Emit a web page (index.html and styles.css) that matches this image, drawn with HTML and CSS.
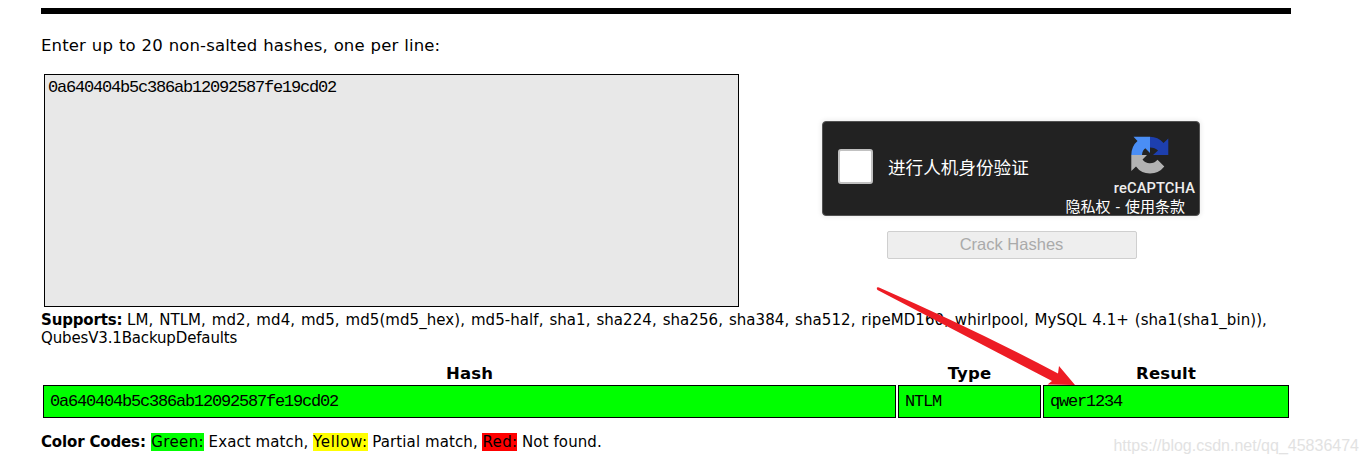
FILE: index.html
```html
<!DOCTYPE html>
<html lang="en">
<head>
<meta charset="utf-8">
<title>Hash Cracker</title>
<link rel="stylesheet" href="styles.css">
</head>
<body>
<main class="page">
  <hr class="rule">
  <p class="intro">Enter up to 20 non-salted hashes, one per line:</p>
  <section class="form">
    <div class="hash-input mono">0a640404b5c386ab12092587fe19cd02</div>
    <div class="side">
      <div class="captcha">
        <span class="check"></span>
        <span class="captcha-label">进行人机身份验证</span>
        <div class="brand">
          <svg class="logo" width="38" height="38" viewBox="0 0 38 38">
            <path fill="#4a8ef5" d="M19 .7H2.500L6.500 5Q.5 10 .3 19H11q.3-4.500 3.300-6.700L19 17z"/>
            <path fill="#1d3fae" d="M19 .7q8 0 13.500 6.300L37.300 2.500V19H22l5-4.500Q24 11.500 19 11.500z"/>
            <path fill="#b2b2b2" d="M.3 19H16l-4.500 4.500Q14.500 27.500 19 27.300q4.500 0 7.500-3.500l6.800 6.800Q28 37.500 19 37.500 10 37.500 5 30.500L.3 35z"/>
          </svg>
          <span class="brand-name">reCAPTCHA</span>
          <span class="terms">隐私权 - 使用条款</span>
        </div>
      </div>
      <button class="crack" disabled>Crack Hashes</button>
    </div>
  </section>
  <p class="supports"><b>Supports:</b> <span class="algos">LM, NTLM, md2, md4, md5, md5(md5_hex), md5-half, sha1, sha224, sha256, sha384, sha512, ripeMD160, whirlpool, MySQL 4.1+ (sha1(sha1_bin)),</span><br>QubesV3.1BackupDefaults</p>
  <section class="results">
    <div class="head">Hash</div><div class="head">Type</div><div class="head">Result</div>
    <div class="cell mono">0a640404b5c386ab12092587fe19cd02</div><div class="cell mono">NTLM</div><div class="cell mono">qwer1234</div>
  </section>
  <p class="codes"><b>Color Codes:</b> <span class="green">Green:</span> <span class="meaning">Exact match,</span> <span class="yellow">Yellow:</span> <span class="meaning">Partial match,</span> <span class="red">Red:</span> <span class="meaning">Not found.</span></p>
</main>
<svg class="arrow" width="200" height="102" viewBox="0 0 200 102"><path fill="#ed1c24" d="M1 .5Q.5 2 1.500 3L176 94l-4.500 3.500L199 98 183 79l-1 7.500Q100 43 3 .5 2 0 1 .5z"/></svg>
<div class="watermark">https://blog.csdn.net/qq_45836474</div>
</body>
</html>
```
FILE: styles.css
```css
* { box-sizing: border-box; }
body { margin: 0; background: #fff; color: #000; font-family: "DejaVu Sans", sans-serif; width: 1368px; height: 464px; overflow: hidden; position: relative; }
p { margin: 0; white-space: nowrap; }
.page { width: 1250px; margin-left: 41px; padding-top: 8px; }
.rule { height: 6px; margin: 0; border: 0; background: #000; }
.intro { margin-top: 22px; height: 38px; font-size: 16.500px; line-height: 19px; letter-spacing: .13px; word-spacing: .5px; }
.mono { font-family: "Liberation Mono", monospace; font-size: 17px; letter-spacing: -1.2px; }
.form { display: flex; }
.hash-input { width: 695px; height: 233px; margin-left: 3px; border: 1px solid #000; background: #e8e8e8; padding: 3px; line-height: 20px; }
.side { width: 378px; margin-left: 83px; padding-top: 47px; display: flex; flex-direction: column; align-items: center; }
.captcha { width: 378px; height: 95px; display: flex; align-items: center; padding: 0 4px 0 15px; border: 1px solid #525252; border-radius: 4px; background: #222; box-shadow: 0 0 5px 1px rgba(0,0,0,.08); color: #fff; }
.check { width: 35px; height: 35px; border: 2px solid #c1c1c1; border-radius: 3px; background: #fff; margin-top: -4px; }
.captcha-label { margin: -5px 0 0 15px; font: 17.600px "Noto Sans CJK SC", sans-serif; white-space: nowrap; }
.brand { margin-left: auto; height: 93px; padding-top: 14px; display: flex; flex-direction: column; align-items: flex-end; }
.logo { margin-right: 26px; flex: none; }
.brand-name { margin-top: 5px; font: 500 14.700px/18px Roboto, sans-serif; letter-spacing: .1px; color: #eee; }
.terms { margin: 0 10px 0 0; font: 15px/20px Roboto, "Noto Sans CJK SC", sans-serif; word-spacing: 1.500px; white-space: nowrap; }
.crack { width: 250px; height: 28px; margin: 15px 0 0 2px; padding: 0 1px 2px 0; border: 1px solid #cfcfcf; border-radius: 2px; background: #eee; color: #aaa; font: 16.500px/24px "Liberation Sans", Arial, sans-serif; }
.supports { margin-top: 4px; font-size: 15px; line-height: 18px; letter-spacing: -.15px; }
.algos { letter-spacing: .07px; word-spacing: 1px; }
.results { display: grid; grid-template-columns: 853px 143px 246px; column-gap: 2px; margin: 16px 0 0 2px; }
.head { height: 22px; line-height: 21px; text-align: center; font-size: 16.500px; font-weight: bold; letter-spacing: .15px; }
.cell { height: 33px; border: 1px solid #000; background: #0f0; padding: 5px 6px; line-height: 21px; }
.codes { margin-top: 15px; font-size: 15px; line-height: 18px; letter-spacing: -.15px; }
.codes b { margin-right: 1px; }
.meaning { letter-spacing: .1px; }
.green, .yellow, .red { letter-spacing: .35px; }
.green { background: #0f0; }
.yellow { background: #ff0; letter-spacing: .6px; }
.red { background: #f00; }
.arrow { position: absolute; left: 876px; top: 287px; }
.watermark { position: absolute; right: 9px; bottom: 8px; font: 16px/20px "Liberation Sans", Arial, sans-serif; color: #e2e2e2; }
```
